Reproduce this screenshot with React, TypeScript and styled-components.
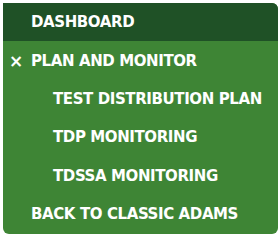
import React from 'react';
import styled, { createGlobalStyle } from 'styled-components';

const Global = createGlobalStyle`
  body {
    margin: 0;
    background: #ffffff;
    font-family: "DejaVu Sans", "Noto Sans", sans-serif;
  }
`;

const Panel = styled.nav`
  margin: 3px 0 0 3px;
  width: 275px;
  background: #3e8535;
  border-radius: 0 6px 6px 6px;
  overflow: hidden;
  padding-bottom: 1px;
`;

const Item = styled.div<{ $level: number; $active?: boolean }>`
  position: relative;
  display: flex;
  align-items: center;
  height: 38.4px;
  padding-left: ${(p) => 28 + p.$level * 22}px;
  background: ${(p) => (p.$active ? '#1f5126' : 'transparent')};
  color: #ffffff;
  font-weight: 700;
  font-size: 15px;
  letter-spacing: -0.4px;
  white-space: nowrap;
`;

const Toggle = styled.span`
  position: absolute;
  left: 6px;
  font-size: 17px;
  font-weight: 700;
`;

const items = [
  { label: 'DASHBOARD', level: 0, active: true },
  { label: 'PLAN AND MONITOR', level: 0, open: true },
  { label: 'TEST DISTRIBUTION PLAN', level: 1 },
  { label: 'TDP MONITORING', level: 1 },
  { label: 'TDSSA MONITORING', level: 1 },
  { label: 'BACK TO CLASSIC ADAMS', level: 0 },
];

const App = () => (
  <>
    <Global />
    <Panel>
      {items.map((it) => (
        <Item key={it.label} $level={it.level} $active={it.active}>
          {it.open && <Toggle>×</Toggle>}
          {it.label}
        </Item>
      ))}
    </Panel>
  </>
);

export default App;
